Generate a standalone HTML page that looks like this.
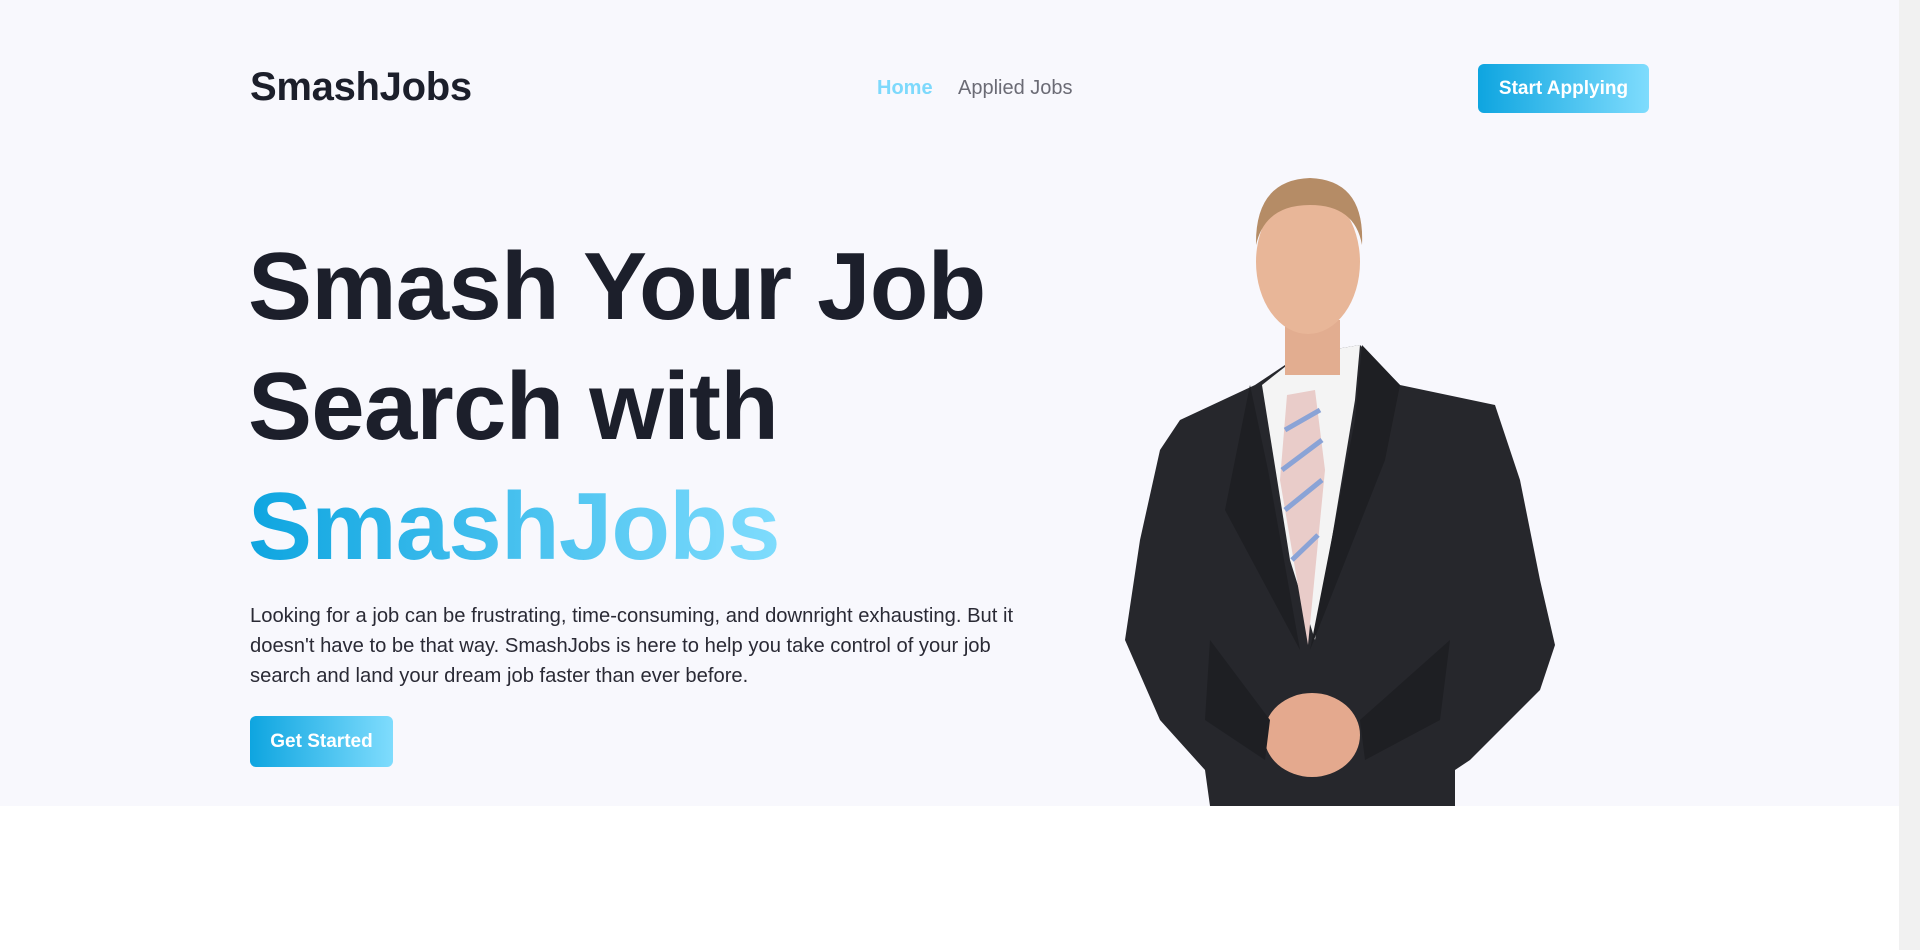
<!DOCTYPE html>
<html><head><meta charset="utf-8"><style>
*{margin:0;padding:0;box-sizing:border-box}
html,body{width:1920px;height:950px;overflow:hidden;background:#fff;font-family:"Liberation Sans",sans-serif}
.hero{position:absolute;left:0;top:0;width:1899px;height:806px;background:#f8f8fd}
.logo{position:absolute;left:250px;top:65px;font-size:40px;font-weight:bold;color:#1c1f2b;letter-spacing:-0.3px}
.nav{position:absolute;top:77px;font-size:20px}
.btn{position:absolute;background:linear-gradient(90deg,#0ea5e0,#7fdcfd);color:#fff;font-weight:bold;font-size:19px;border-radius:6px;display:flex;align-items:center;justify-content:center}
h1{position:absolute;left:248px;top:227px;font-size:96px;line-height:120px;letter-spacing:-0.8px;color:#1c1f2b;font-weight:bold}
.grad{background:linear-gradient(90deg,#0ea5e0,#7fdcfd);-webkit-background-clip:text;background-clip:text;color:transparent}
p{position:absolute;left:250px;top:601px;width:780px;font-size:20.2px;line-height:30px;color:#2a2a35}
.sb{position:absolute;left:1899px;top:0;width:21px;height:950px;background:#f1f1f1}
.th{position:absolute;left:1901px;top:20px;width:17px;height:280px;background:#c1c1c1}
</style></head><body>
<div class="hero">
<div class="logo">SmashJobs</div>
<div class="nav" style="left:877px;color:#7dd9fc;font-weight:bold">Home</div>
<div class="nav" style="left:958px;color:#6b6b75">Applied Jobs</div>
<div class="btn" style="left:1478px;top:64px;width:171px;height:49px">Start Applying</div>
<h1>Smash Your Job<br>Search with<br><span class="grad">SmashJobs</span></h1>
<p>Looking for a job can be frustrating, time-consuming, and downright exhausting. But it doesn't have to be that way. SmashJobs is here to help you take control of your job search and land your dream job faster than ever before.</p>
<div class="btn" style="left:250px;top:716px;width:143px;height:51px">Get Started</div>
<svg style="position:absolute;left:0;top:0" width="1899" height="806">
<path d="M1180 420 L1255 385 L1300 355 L1360 345 L1400 385 L1495 405 L1520 480 L1540 580 L1555 645 L1540 690 L1470 760 L1455 770 L1455 806 L1210 806 L1205 770 L1160 720 L1125 640 L1140 540 L1160 450 Z" fill="#26272c"/>
<path d="M1262 385 L1300 355 L1360 345 L1355 400 L1315 640 L1290 560 Z" fill="#f4f4f4"/>
<path d="M1287 395 L1315 390 L1325 470 L1308 645 L1280 480 Z" fill="#e9ccc9"/>
<path d="M1285 430 L1320 410 M1282 470 L1322 440 M1285 510 L1322 480 M1292 560 L1318 535" stroke="#8aa3d6" stroke-width="5"/>
<path d="M1250 385 L1268 470 L1300 650 L1225 510 Z" fill="#1e1f23"/>
<path d="M1362 345 L1400 385 L1385 460 L1310 650 L1355 420 Z" fill="#1e1f23"/>
<rect x="1285" y="320" width="55" height="55" fill="#e2ad90"/>
<ellipse cx="1308" cy="262" rx="52" ry="72" fill="#e8b698"/>
<path d="M1256 245 Q1255 180 1310 178 Q1365 180 1362 245 Q1355 205 1310 205 Q1265 205 1256 245 Z" fill="#b58c66"/>
<ellipse cx="1312" cy="735" rx="48" ry="42" fill="#e4a98e"/>
<path d="M1210 640 L1270 720 L1265 760 L1205 720 Z" fill="#1e1f23"/>
<path d="M1450 640 L1360 720 L1365 760 L1440 720 Z" fill="#1e1f23"/>
</svg>
</div>
<div class="sb"><div class="th"></div></div>
</body></html>
